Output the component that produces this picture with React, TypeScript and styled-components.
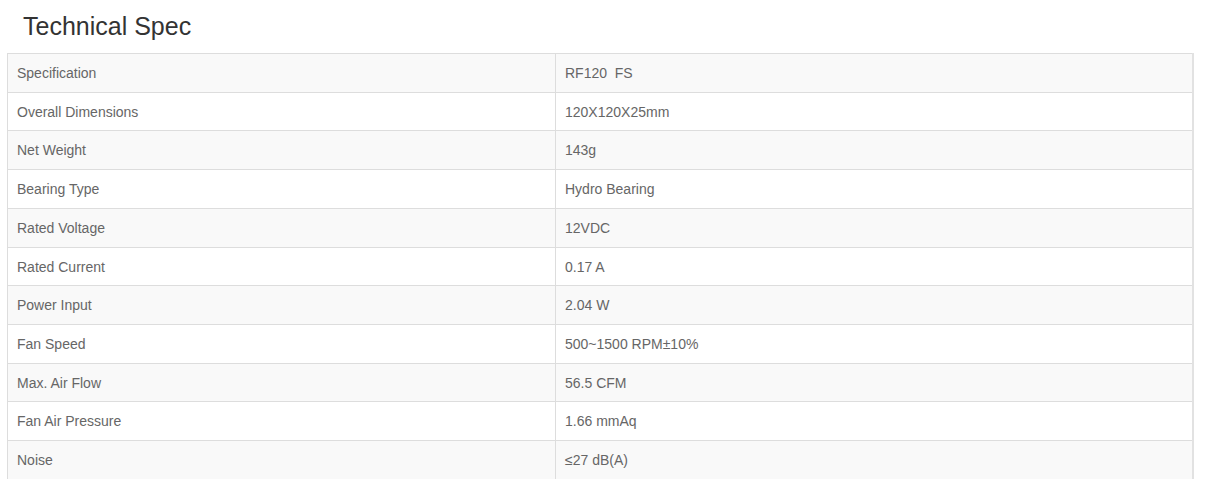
import React from "react";
import styled, { createGlobalStyle } from "styled-components";

const Global = createGlobalStyle`
  html, body { margin: 0; padding: 0; background: #fff; }
  body { font-family: "Liberation Sans", Arial, sans-serif; }
`;

const Page = styled.div`
  padding: 13px 12px 0 7px;
`;

const Title = styled.h2`
  margin: 0 0 13px 16px;
  font-size: 25px;
  line-height: 27px;
  font-weight: 400;
  color: #333;
`;

const Table = styled.table`
  width: 1187px;
  border-collapse: collapse;
  border: 1px solid #ddd;
  border-right: 2px solid #e2e2e2;
`;

const Row = styled.tr<{ $striped: boolean }>`
  background: ${(p) => (p.$striped ? "#f9f9f9" : "#fff")};
`;

const Cell = styled.td<{ $label?: boolean }>`
  border: 1px solid #ddd;
  padding: 10px 9px 8px 9px;
  font-size: 14px;
  line-height: 19.7px;
  color: #666;
  width: ${(p) => (p.$label ? "529px" : "auto")};
  white-space: pre;
`;

const rows: [string, string][] = [
  ["Specification", "RF120  FS"],
  ["Overall Dimensions", "120X120X25mm"],
  ["Net Weight", "143g"],
  ["Bearing Type", "Hydro Bearing"],
  ["Rated Voltage", "12VDC"],
  ["Rated Current", "0.17 A"],
  ["Power Input", "2.04 W"],
  ["Fan Speed", "500~1500 RPM±10%"],
  ["Max. Air Flow", "56.5 CFM"],
  ["Fan Air Pressure", "1.66 mmAq"],
  ["Noise", "≤27 dB(A)"],
];

export default function App() {
  return (
    <>
      <Global />
      <Page>
        <Title>Technical Spec</Title>
        <Table>
          <tbody>
            {rows.map(([k, v], i) => (
              <Row key={k} $striped={i % 2 === 0}>
                <Cell $label>{k}</Cell>
                <Cell>{v}</Cell>
              </Row>
            ))}
          </tbody>
        </Table>
      </Page>
    </>
  );
}
